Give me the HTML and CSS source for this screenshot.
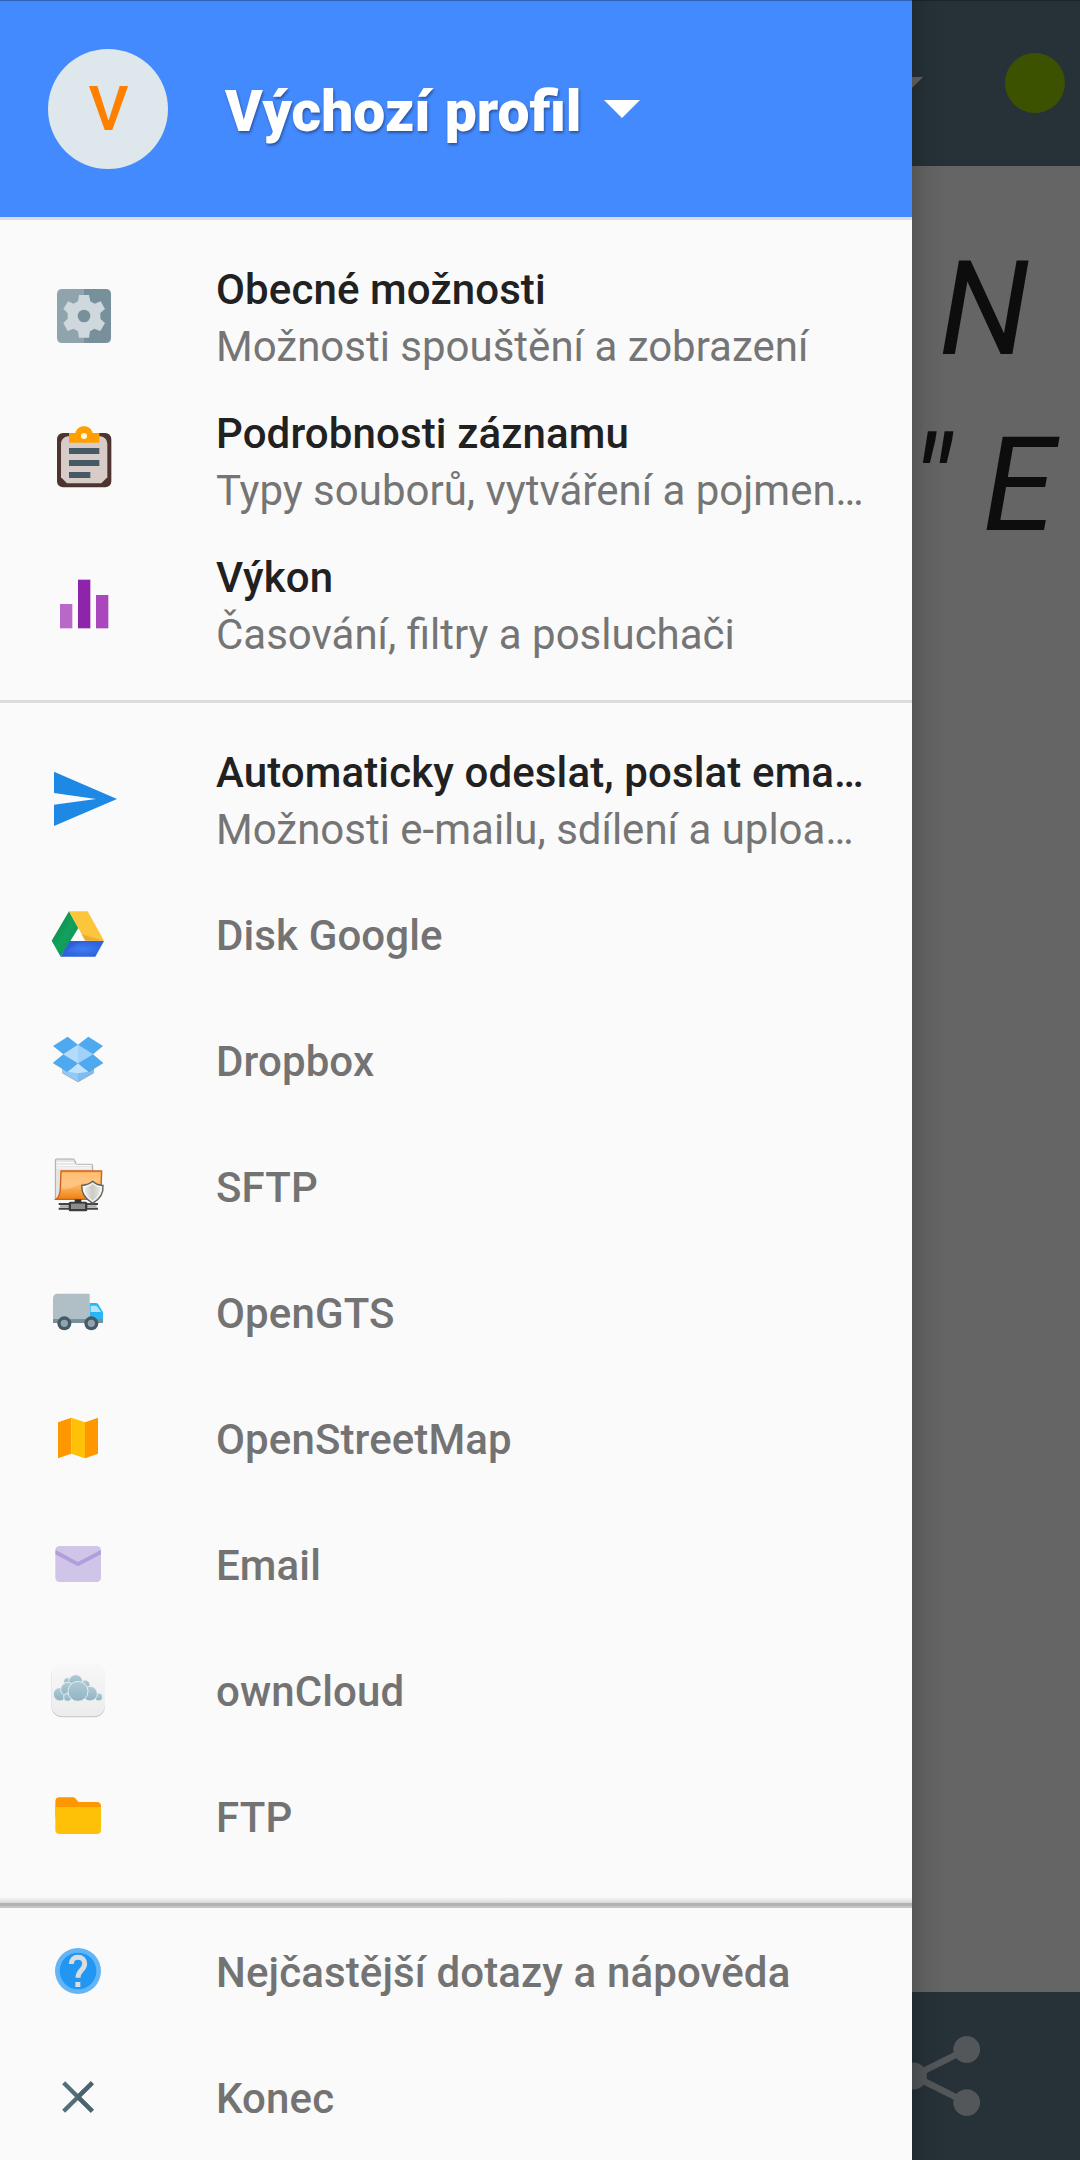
FILE: index.html
```html
<!DOCTYPE html>
<html lang="cs">
<head>
<meta charset="utf-8">
<title>Výchozí profil</title>
<link rel="stylesheet" href="styles.css">
</head>
<body>
<div class="screen">
  <aside class="drawer">
    <header class="profile">
      <div class="avatar">V</div>
      <h1 class="profile-name">Výchozí profil</h1>
      <svg class="caret" viewBox="0 0 36 18"><path d="M0 0H36L18 18Z" fill="#fff"/></svg>
    </header>

    <nav class="menu">
      <section class="group">
        <div class="row row-large">
          <svg class="icon-large" viewBox="54 30 216 216">
            <path d="M162 57H97q-16 0-16 16v130q0 16 16 16h65z" fill="#90a4ae"/>
            <path d="M162 57h65q16 0 16 16v130q0 16-16 16h-65z" fill="#78909c"/>
            <path d="M147 75h30l4 19 13 7 18-7 13 23-14 12v17l14 13-14 24-18-7-13 8-3 19h-30l-3-19-13-8-18 7-13-24 13-13v-17l-13-12 14-23 17 7 13-7z" fill="#cfd8dc"/>
            <circle cx="162" cy="138" r="19" fill="#78909c"/>
          </svg>
          <div class="labels"><div class="label">Obecné možnosti</div><div class="sub">Možnosti spouštění a zobrazení</div></div>
        </div>
        <div class="row row-large">
          <svg class="icon-large" viewBox="54 462 216 216">
            <rect x="81" y="489" width="163" height="163" rx="18" fill="#4e342e"/>
            <path d="M112 499h100q20 4 20 24v99l-18 18H111l-18-18V520q2-17 19-21z" fill="#d7ccc8"/>
            <path d="M117 489h19c3-12 13-20 26-20s23 8 26 20h20v29h-91z" fill="#ffa000"/>
            <circle cx="162" cy="498" r="9" fill="#fff8e1"/>
            <path d="M117 534h91v18h-91zM117 570h91v18h-91zM117 606h64v18h-64z" fill="#455a64"/>
          </svg>
          <div class="labels"><div class="label">Podrobnosti záznamu</div><div class="sub">Typy souborů, vytváření a pojmen…</div></div>
        </div>
        <div class="row row-large">
          <svg class="icon-large" viewBox="54 894 216 216">
            <path d="M90 1002h37v73H90z" fill="#ba68c8"/>
            <path d="M144 929h37v146h-37z" fill="#8e24aa"/>
            <path d="M198 975h37v100h-37z" fill="#ab47bc"/>
          </svg>
          <div class="labels"><div class="label">Výkon</div><div class="sub">Časování, filtry a posluchači</div></div>
        </div>
      </section>

      <section class="group group-services">
        <div class="row row-large">
          <svg class="icon-large" viewBox="54 69 216 216">
            <path d="M72 95L261 177 72 258V194L198 177 72 159z" fill="#1e88e5"/>
          </svg>
          <div class="labels"><div class="label">Automaticky odeslat, poslat ema…</div><div class="sub">Možnosti e-mailu, sdílení a uploa…</div></div>
        </div>
        <div class="row">
          <svg class="icon" viewBox="54 492 180 180">
            <defs>
              <linearGradient id="dg" x1="0" y1="0" x2="1" y2="1"><stop offset="0" stop-color="#0b8043"/><stop offset=".5" stop-color="#12a15c"/><stop offset="1" stop-color="#0f8f50"/></linearGradient>
              <radialGradient id="db"><stop offset="0" stop-color="#3f7ef5"/><stop offset="1" stop-color="#2f62dc"/></radialGradient>
            </defs>
            <path d="M117 514l28 50-53 86-27-48z" fill="url(#dg)"/>
            <path d="M117 514h56l49 88h-56z" fill="#fcc53c"/>
            <path d="M155 583l67 19h-56z" fill="#e9ae30"/>
            <path d="M119 603h103l-26 47H92z" fill="url(#db)"/>
            <path d="M119 603h38l-58 35z" fill="#2b5bd0" opacity=".6"/>
          </svg>
          <div class="label">Disk Google</div>
        </div>
        <div class="row">
          <svg class="icon" viewBox="54 870 180 180">
            <path d="M97 985l47 12 47-12v15l-47 27-47-27z" fill="#000" opacity=".4"/>
            <path d="M97 974h47v51l-47-27z" fill="#90caf9"/>
            <path d="M144 974h47v24l-47 27z" fill="#7dbdf2"/>
            <path d="M69 970l29-22 46 24-32 24zM220 970l-29-22-47 24 33 24z" fill="#527fa6" opacity=".6"/>
            <path d="M144 914l45 29-45 27-44-27z" fill="#b3dcfb"/>
            <path d="M144 914l45 29-45 27z" fill="#9fd2fa"/>
            <path d="M144 970l-31 25 31 5 31-5z" fill="#c1e2fb"/>
            <path d="M69 918l44-28 31 24-44 29zM219 918l-44-28-31 24 45 29zM69 968l31-25 44 27-32 25zM219 968l-30-25-45 27 33 25z" fill="#4fa9ee"/>
          </svg>
          <div class="label">Dropbox</div>
        </div>
        <div class="row">
          <svg class="icon" viewBox="54 78 180 180">
            <defs>
              <linearGradient id="of" x1="0" y1="0" x2="0" y2="1"><stop offset="0" stop-color="#ffae52"/><stop offset=".5" stop-color="#ffb863"/><stop offset="1" stop-color="#ee8012"/></linearGradient>
              <linearGradient id="sh" x1="0" y1="0" x2="1" y2="0"><stop offset="0" stop-color="#f4f4f2"/><stop offset=".5" stop-color="#cbccc7"/><stop offset="1" stop-color="#ecece9"/></linearGradient>
            </defs>
            <path d="M76 207V90q0-3 3-3h51q4 0 5 6l3 8q1 2 4 2h43q3 0 3 3v90z" fill="#e4e4e2" stroke="#aaa" stroke-width="3"/>
            <path d="M80 98h50M80 106h103M80 114h103" stroke="#fff" stroke-width="3"/>
            <path d="M78 208q12-8 13-35l2-50h122l-2 59q-2 24-20 26z" fill="url(#of)" stroke="#ce6218" stroke-width="4"/>
            <path d="M96 128h115l-1 30q-55-2-78 12-18 10-38 8z" fill="#fff" opacity=".2"/>
            <path d="M86 222h118M86 236h118" stroke="#444" stroke-width="6"/>
            <path d="M90 229h110" stroke="#aaa" stroke-width="7"/>
            <rect x="116" y="215" width="56" height="29" rx="5" fill="#3c3c3c"/>
            <rect x="123" y="221" width="42" height="16" fill="#8c8c8c"/>
            <path d="M144 208v10" stroke="#333" stroke-width="20"/>
            <path d="M188 154q15 13 31 12 3 35-31 54-34-19-33-54 18 0 33-12z" fill="url(#sh)" stroke="#5c5c5c" stroke-width="4"/>
            <path d="M188 160q12 11 25 11 0 27-25 42-25-15-26-42 15 0 26-11z" fill="none" stroke="#fff" stroke-width="3"/>
          </svg>
          <div class="label">SFTP</div>
        </div>
        <div class="row">
          <svg class="icon" viewBox="54 456 180 180">
            <path d="M69 567h150v12H69z" fill="#78909c"/>
            <path d="M84 491h95v76H69v-61q0-15 15-15z" fill="#b0bec5"/>
            <path d="M179 519h18q6 0 8 4l13 22q1 2 1 5v17h-40z" fill="#29b6f6"/>
            <path d="M182 527h15q3 0 4 2l12 17h-31z" fill="#b3e5fc"/>
            <circle cx="103" cy="580" r="21" fill="#455a64"/><circle cx="103" cy="580" r="11" fill="#90a4ae"/>
            <circle cx="184" cy="580" r="21" fill="#455a64"/><circle cx="184" cy="580" r="11" fill="#90a4ae"/>
          </svg>
          <div class="label">OpenGTS</div>
        </div>
        <div class="row">
          <svg class="icon" viewBox="54 834 180 180">
            <path d="M84 877l40-14v108l-40 14zM165 877l39-14v108l-39 14z" fill="#ff9800"/>
            <path d="M124 863l41 14v108l-41-14z" fill="#ffc107"/>
          </svg>
          <div class="label">OpenStreetMap</div>
        </div>
        <div class="row">
          <svg class="icon" viewBox="54 102 180 180">
            <rect x="76" y="138" width="137" height="108" rx="13" fill="#d1c4e9"/>
            <path d="M77 150l67 36 68-36 1 13-69 36-68-36z" fill="#b39ddb"/>
          </svg>
          <div class="label">Email</div>
        </div>
        <div class="row">
          <svg class="icon" viewBox="54 480 180 180">
            <defs>
              <linearGradient id="tile" x1="0" y1="0" x2="0" y2="1"><stop offset="0" stop-color="#f8f8f8"/><stop offset="1" stop-color="#ececec"/></linearGradient>
              <linearGradient id="cl" x1="0" y1="0" x2="0" y2="1"><stop offset="0" stop-color="#b0cbd7"/><stop offset="1" stop-color="#8fb3c3"/></linearGradient>
            </defs>
            <rect x="64" y="492" width="161" height="160" rx="33" fill="#c4c4c4"/>
            <rect x="64" y="489" width="161" height="160" rx="33" fill="url(#tile)"/>
            <g fill="url(#cl)" stroke="#f3f3f3" stroke-width="2.5">
              <circle cx="112" cy="544" r="11"/><circle cx="165" cy="555" r="15"/>
              <circle cx="137" cy="545" r="21"/><circle cx="90" cy="583" r="20"/>
              <circle cx="113" cy="568" r="21"/><circle cx="113" cy="592" r="12"/>
              <circle cx="206" cy="591" r="12"/><circle cx="180" cy="581" r="22"/>
              <circle cx="144" cy="574" r="30"/>
            </g>
          </svg>
          <div class="label">ownCloud</div>
        </div>
        <div class="row">
          <svg class="icon" viewBox="54 858 180 180">
            <path d="M88 892h41q5 0 8 4l9 10h54q13 0 13 13v32H76v-46q0-13 12-13z" fill="#ff9800"/>
            <path d="M76 921h137v68q0 13-13 13H89q-13 0-13-13z" fill="#ffc107"/>
          </svg>
          <div class="label">FTP</div>
        </div>
      </section>
    </nav>

    <footer class="footer">
      <div class="row">
        <svg class="icon" viewBox="54 183 180 180">
          <circle cx="144" cy="273" r="69" fill="#64b5f6"/>
          <circle cx="144" cy="273" r="55" fill="#2196f3"/>
          <path d="M124 252c0-13 8-20 20-20s20 8 20 19c0 18-20 20-20 42" fill="none" stroke="#dadde0" stroke-width="15"/>
          <path d="M136 306h15v15h-15z" fill="#dadde0"/>
        </svg>
        <div class="label">Nejčastější dotazy a nápověda</div>
      </div>
      <div class="row">
        <svg class="icon" viewBox="54 561 180 180">
          <path d="M101 608l86 86M187 608l-86 86" stroke="#546e7a" stroke-width="13"/>
          <path d="M144 651l43-43M144 651l43 43" stroke="#4b636e" stroke-width="13"/>
        </svg>
        <div class="label">Konec</div>
      </div>
    </footer>
  </aside>

  <main class="page">
    <div class="appbar">
      <svg class="appbar-caret" viewBox="0 0 36 18"><path d="M0 0H36L18 18Z" fill="#656565"/></svg>
      <span class="status-dot"></span>
    </div>
    <div class="coords"><div>N</div><div>" E</div></div>
    <div class="toolbar">
      <svg class="share" viewBox="0 0 80 80">
        <g fill="#53575a"><circle cx="13.5" cy="40" r="13.4"/><circle cx="66.7" cy="13.4" r="13.4"/><circle cx="66.7" cy="66.6" r="13.4"/></g>
        <path d="M66.7 13.4L13.5 40l53.2 26.6" fill="none" stroke="#53575a" stroke-width="6.6"/>
      </svg>
    </div>
  </main>
</div>
</body>
</html>
```
FILE: styles.css
```css
* { box-sizing: border-box; }

body {
  margin: 0;
  font-family: Roboto, "Liberation Sans", sans-serif;
}

.screen {
  position: relative;
  display: flex;
  width: 1080px;
  height: 2160px;
  overflow: hidden;
  background: #656565;
}

.drawer {
  z-index: 1;
  display: flex;
  flex-direction: column;
  flex: 0 0 912px;
  height: 2160px;
  background: #fafafa;
}

.profile {
  display: flex;
  align-items: center;
  height: 220px;
  padding: 1px 48px 0;
  border-bottom: 3px solid #dcdcdc;
  background: #448aff;
  box-shadow: inset 0 1px 0 #2f61b8;
}

.avatar {
  width: 120px;
  height: 120px;
  border-radius: 50%;
  background: #dee7ec;
  color: #ff8000;
  font-size: 62px;
  font-weight: 500;
  line-height: 119px;
  text-align: center;
  text-indent: 1px;
}

.profile-name {
  margin: 6px 0 0 57px;
  color: #fff;
  font-size: 57px;
  font-weight: 900;
  line-height: 66px;
  white-space: nowrap;
  text-shadow: 1px 2px 3px rgba(0, 0, 0, .4);
}

.caret {
  width: 36px;
  height: 18px;
  margin-left: 23px;
}

.group { padding: 24px 0; }

.group-services {
  border-top: 3px solid #dcdcdc;
  padding-bottom: 18px;
}

.row {
  display: grid;
  grid-template-columns: 168px 1fr;
  align-items: center;
  height: 126px;
  padding-left: 48px;
}

.row-large { height: 144px; }

.icon {
  width: 60px;
  height: 60px;
}

.icon-large {
  width: 72px;
  height: 72px;
}

.label,
.sub {
  font-size: 42px;
  line-height: 49px;
  white-space: nowrap;
}

.label {
  color: #737373;
  font-weight: 500;
  letter-spacing: .12px;
}

.row > .label { padding-top: 2px; }

.row-large .label { color: #212121; }

.sub {
  margin-top: 8px;
  color: #757575;
}

.labels { padding-top: 3px; }

.footer::before {
  content: "";
  display: block;
  height: 11px;
  background: linear-gradient(#fafafa 0, #d8d8d8 6px, #b0b0b0 6px, #b4b4b4 9px, #c6c6c6 9px);
}

.page {
  display: flex;
  flex-direction: column;
  flex: 1;
  min-width: 0;
  position: relative;
}

.page::after {
  content: "";
  position: absolute;
  inset: 0 auto 0 0;
  width: 36px;
  background: linear-gradient(90deg, rgba(0, 0, 0, .16), rgba(0, 0, 0, .05) 40%, transparent);
}

.appbar {
  display: flex;
  align-items: flex-start;
  justify-content: space-between;
  height: 166px;
  padding: 53px 15px 0 0;
  background: #263238;
  box-shadow: inset 0 1px 0 #1c2529;
}

.appbar-caret {
  width: 36px;
  height: 18px;
  margin: 24px 0 0 -25px;
}

.status-dot {
  width: 60px;
  height: 60px;
  border-radius: 50%;
  background: #3d5200;
}

.coords {
  flex: 1;
  padding-top: 55px;
  color: #0d0d0d;
  font-size: 131px;
  font-style: italic;
  line-height: 176px;
  white-space: pre;
}

.coords div { margin-left: -2px; }

.coords div:first-child { padding-left: 29px; }

.toolbar {
  height: 168px;
  padding-top: 44px;
  background: #263238;
}

.share {
  display: block;
  width: 80px;
  height: 80px;
  margin-left: -12px;
}
```
